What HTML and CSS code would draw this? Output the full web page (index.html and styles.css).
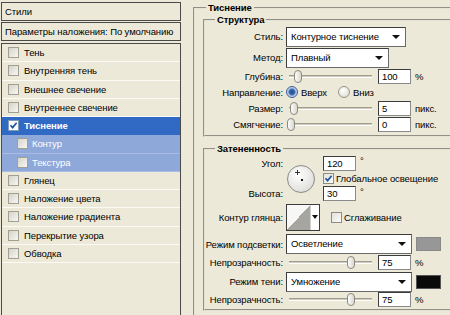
FILE: index.html
```html
<!DOCTYPE html>
<html>
<head>
	<title>Стиль слоя</title>

<link rel="stylesheet" href="styles.css">
</head>
<body>
	<div class="window">
		<div class="side">
			<div class="side-head">Стили</div>
			<div class="side-blend">Параметры наложения: По умолчанию</div>
			<div class="side-list">
				<div class="item"><span class="cb"></span>Тень</div>
				<div class="item"><span class="cb"></span>Внутренняя тень</div>
				<div class="item"><span class="cb"></span>Внешнее свечение</div>
				<div class="item"><span class="cb"></span>Внутреннее свечение</div>
				<div class="item active"><span class="cb on"><svg viewBox="0 0 9 9"><path d="M1.5 4.2 L3.6 6.6 L7.6 1.8" fill="none" stroke="#2152a3" stroke-width="1.7"/></svg></span>Тиснение</div>
				<div class="item sub"><span class="cb"></span>Контур</div>
				<div class="item sub"><span class="cb"></span>Текстура</div>
				<div class="item"><span class="cb"></span>Глянец</div>
				<div class="item"><span class="cb"></span>Наложение цвета</div>
				<div class="item"><span class="cb"></span>Наложение градиента</div>
				<div class="item"><span class="cb"></span>Перекрытие узора</div>
				<div class="item"><span class="cb"></span>Обводка</div>
			</div>
		</div>

		<div class="main">
			<fieldset class="group outer">
				<legend>Тиснение</legend>

				<fieldset class="group inner">
					<legend>Структура</legend>
					<div class="row h21">
						<label>Стиль:</label>
						<div class="select w120">Контурное тиснение</div>
					</div>
					<div class="row h21">
						<label>Метод:</label>
						<div class="select w103">Плавный</div>
					</div>
					<div class="row h16">
						<label>Глубина:</label>
						<div class="slider"><span class="thumb" style="left: 8px;"></span></div>
						<div class="num">100</div>
						<span class="unit">%</span>
					</div>
					<div class="row h16">
						<label>Направление:</label>
						<span class="radio on"></span><span class="opt">Вверх</span>
						<span class="radio"></span><span class="opt">Вниз</span>
					</div>
					<div class="row h16">
						<label>Размер:</label>
						<div class="slider"><span class="thumb" style="left: 4px;"></span></div>
						<div class="num">5</div>
						<span class="unit">пикс.</span>
					</div>
					<div class="row h16">
						<label>Смягчение:</label>
						<div class="slider"><span class="thumb" style="left: 1px;"></span></div>
						<div class="num">0</div>
						<span class="unit">пикс.</span>
					</div>
				</fieldset>

				<fieldset class="group inner shade">
					<legend>Затененность</legend>
					<div class="angle-block">
						<label class="a-lbl1">Угол:</label>
						<div class="dial">
							<svg width="28" height="28" viewBox="0 0 28 28">
								<defs>
									<radialGradient id="dialFill" cx="40%" cy="35%" r="70%">
										<stop offset="0" stop-color="#ffffff"/>
										<stop offset="1" stop-color="#dcdcd8"/>
									</radialGradient>
								</defs>
								<circle cx="14" cy="14" r="13.5" fill="url(#dialFill)" stroke="#8a8a86"/>
								<path d="M10.5 5 V10 M8 7.5 H13" stroke="#333" stroke-width="1"/>
								<rect x="14" y="14" width="2" height="2" fill="#111"/>
							</svg>
						</div>
						<div class="num a-in1">120</div>
						<span class="unit deg a-deg1">°</span>
						<div class="a-check"><span class="cb on light"><svg viewBox="0 0 9 9"><path d="M1.5 4.2 L3.6 6.6 L7.6 1.8" fill="none" stroke="#2152a3" stroke-width="1.7"/></svg></span>Глобальное освещение</div>
						<label class="a-lbl2">Высота:</label>
						<div class="num a-in2">30</div>
						<span class="unit deg a-deg2">°</span>
					</div>
					<div class="row h33">
						<label>Контур глянца:</label>
						<div class="contour">
							<span class="preview"></span>
							<span class="drop"></span>
						</div>
						<span class="cb light smooth"></span><span>Сглаживание</span>
					</div>
					<div class="row h20">
						<label>Режим подсветки:</label>
						<div class="select w126">Осветление</div>
						<span class="swatch grey"></span>
					</div>
					<div class="row h17">
						<label>Непрозрачность:</label>
						<div class="slider"><span class="thumb" style="left: 61px;"></span></div>
						<div class="num">75</div>
						<span class="unit">%</span>
					</div>
					<div class="row h21">
						<label>Режим тени:</label>
						<div class="select w126">Умножение</div>
						<span class="swatch black"></span>
					</div>
					<div class="row h14">
						<label>Непрозрачность:</label>
						<div class="slider"><span class="thumb" style="left: 61px;"></span></div>
						<div class="num">75</div>
						<span class="unit">%</span>
					</div>
				</fieldset>
			</fieldset>
		</div>
	</div>
</body>
</html>
```

FILE: styles.css
```css
body{
	margin: 0;
	background: #ece9d8;
	font-family: "Liberation Sans", Arial, sans-serif;
	font-size: 9.5px;
	letter-spacing: -0.1px;
	color: #000;
	overflow: hidden;
}
.window{
	display: flex;
	padding: 2px 0 0 1px;
	height: 313px;
}

/* left list of styles */
.side{
	width: 180px;
	flex: none;
	display: flex;
	flex-direction: column;
}
.side-head, .side-blend{
	border: 1px solid #4a4a4a;
	height: 17px;
	line-height: 17px;
	padding-left: 3px;
	white-space: nowrap;
}
.side-head{
	margin-bottom: 1px;
}
.side-blend{
	margin-bottom: 2px;
}
.side-list{
	flex: 1;
	border: 1px solid #4a4a4a;
	border-bottom: none;
}
.item{
	height: 17.25px;
	border-bottom: 1px solid #fbfaf4;
	display: flex;
	align-items: center;
	padding-left: 6px;
}
.item.active{
	background: #316ac5;
	color: #fff;
	font-weight: bold;
	border-bottom-color: #316ac5;
}
.item.sub{
	background: #8ea8d9;
	color: #fff;
	padding-left: 15px;
	border-bottom-color: #a9bce3;
}
.item.sub .cb{
	margin-right: 4px;
}
.cb{
	width: 9px;
	height: 9px;
	flex: none;
	border: 1px solid #a19f92;
	background: linear-gradient(135deg, #d6d4c9, #f7f7f3);
	margin-right: 5px;
	display: flex;
}
.cb svg{
	width: 9px;
	height: 9px;
}
.cb.on{
	background: #fff;
	border-color: #7f9db9;
}
.cb.light{
	background: linear-gradient(135deg, #e2e1da, #fbfbf9);
	border-color: #8e8c80;
}

/* right part with group boxes */
.main{
	margin-left: 12px;
	width: 320px;
	flex: none;
}
.group{
	margin: 0;
	padding: 0;
	border: 2px groove #e6e3d4;
	min-width: 0;
}
.group legend{
	font-weight: bold;
	line-height: 12px;
	padding: 0 2px;
}
.outer{
	padding: 0 0 20px 8px;
}
.outer > legend{
	margin-left: 3px;
}
.inner > legend{
	margin-left: 10px;
}
.inner{
	padding-bottom: 3px;
}
.shade{
	margin-top: 6px;
}

.row{
	display: flex;
	align-items: center;
	white-space: nowrap;
}
.row label, .angle-block label{
	width: 78px;
	text-align: right;
	margin-right: 3px;
	flex: none;
	white-space: nowrap;
}
.h14{ height: 14px; }
.h16{ height: 16px; }
.h17{ height: 17px; }
.h20{ height: 20px; }
.h21{ height: 21px; }
.h33{ height: 33px; }

.select{
	position: relative;
	height: 20px;
	box-sizing: border-box;
	border: 1px solid #3c3c3c;
	border-right-color: #6a6a6a;
	border-bottom-color: #6a6a6a;
	background: #fff;
	line-height: 18px;
	padding-left: 4px;
}
.select::after{
	content: "";
	position: absolute;
	right: 5px;
	top: 7px;
	border-left: 4px solid transparent;
	border-right: 4px solid transparent;
	border-top: 4px solid #111;
}
.w120{ width: 120px; }
.w103{ width: 103px; }
.w126{ width: 126px; }

.num{
	width: 33px;
	height: 15px;
	box-sizing: border-box;
	border: 1px solid #3c3c3c;
	border-right-color: #8a8a8a;
	border-bottom-color: #8a8a8a;
	background: #fff;
	line-height: 13px;
	padding-left: 3px;
}
.unit{
	margin-left: 4px;
}

.slider{
	position: relative;
	width: 88px;
	height: 13px;
	margin-right: 4px;
}
.slider::before{
	content: "";
	position: absolute;
	left: 3px;
	right: 2px;
	top: 5px;
	height: 1px;
	border-top: 1px solid #a09d8f;
	border-bottom: 1px solid #fff;
	background: #cfccbe;
}
.thumb{
	position: absolute;
	top: 0;
	width: 6px;
	height: 11px;
	border: 1px solid #8c8a80;
	border-radius: 4px;
	background: linear-gradient(90deg, #fdfdfb, #d9d7ce);
}

.radio{
	width: 10px;
	height: 10px;
	border-radius: 50%;
	border: 1px solid #98968a;
	background: radial-gradient(circle at 40% 35%, #ffffff, #d8d6cc);
	margin-right: 3px;
	flex: none;
}
.radio.on{
	border-color: #3d5f8f;
	background: radial-gradient(circle at 50% 50%, #2a4f86 0, #2f64b0 35%, #b9cbe6 60%, #e9eef6 100%);
}
.opt{
	margin-right: 11px;
}

/* angle + altitude block */
.angle-block{
	display: grid;
	grid-template-columns: 81px 37px auto 1fr;
	grid-template-rows: 16px 15px 15px;
	align-items: center;
}
.a-lbl1{ grid-column: 1; grid-row: 1; }
.a-lbl2{ grid-column: 1; grid-row: 3; }
.dial{
	grid-column: 2;
	grid-row: 1 / 4;
	margin-left: 1px;
	height: 28px;
	margin-top: 2px;
}
.a-in1{ grid-column: 3; grid-row: 1; }
.a-deg1{ grid-column: 4; grid-row: 1; align-self: start; }
.a-deg2{ grid-column: 4; grid-row: 3; align-self: start; }
.a-in2{ grid-column: 3; grid-row: 3; }
.a-check{
	grid-column: 3 / 5;
	grid-row: 2;
	display: flex;
	align-items: center;
	white-space: nowrap;
}
.a-check .cb{
	margin-right: 2px;
}

.contour{
	display: flex;
	width: 34px;
	height: 27px;
	box-sizing: border-box;
	border: 1px solid #3c3c3c;
	background: #fff;
}
.preview{
	width: 23px;
	background: linear-gradient(to bottom right, #f7f7f5 50%, #a6a59f 50%);
	border-right: 1px solid #d0d0d0;
}
.drop{
	flex: 1;
	position: relative;
}
.drop::after{
	content: "";
	position: absolute;
	left: 1px;
	top: 10px;
	border-left: 3px solid transparent;
	border-right: 3px solid transparent;
	border-top: 4px solid #111;
}
.smooth{
	margin-left: 11px;
	margin-right: 2px;
}
.swatch{
	width: 25px;
	height: 14px;
	margin-left: 4px;
	box-sizing: border-box;
}
.swatch.grey{
	background: #979797;
	border: 1px solid #8a8a8a;
}
.swatch.black{
	background: #0a0a0a;
	border: 1px solid #555;
}
```
